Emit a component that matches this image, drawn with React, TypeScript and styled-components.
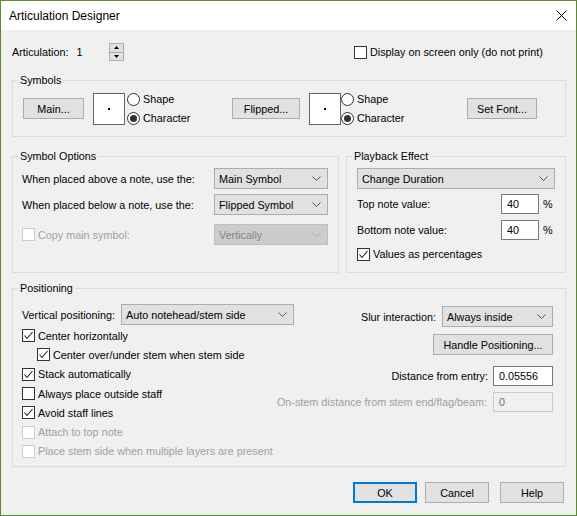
import React from "react";
import styled, { createGlobalStyle } from "styled-components";

const GlobalStyle = createGlobalStyle`
  * { box-sizing: border-box; }
  html, body { margin: 0; padding: 0; }
  body {
    background: #f0f0f0;
    font-family: "Liberation Sans", Arial, sans-serif;
    font-size: 10.8px;
    color: #000;
  }
`;

const Window = styled.div`
  width: 577px;
  height: 516px;
  border: 1px solid #5d8b2c;
  background: #f0f0f0;
  display: flex;
  flex-direction: column;
`;

const TitleBar = styled.div`
  height: 29px;
  flex: none;
  background: #fff;
  display: flex;
  align-items: center;
  justify-content: space-between;
  padding: 0 9px 0 8px;
  font-size: 12px;
`;

const Body = styled.div`
  flex: 1;
  display: flex;
  flex-direction: column;
  padding: 13px 10px 0 11px;
`;

const TopRow = styled.div`
  height: 18px;
  display: flex;
  align-items: center;
`;

const Value = styled.span`
  width: 33px;
  margin-left: 8px;
`;

const Spinner = styled.div`
  width: 15px;
  height: 18px;
  display: flex;
  flex-direction: column;
`;

const SpinHalf = styled.div`
  flex: 1;
  background: #e1e1e1;
  border: 1px solid #adadad;
  display: flex;
  align-items: center;
  justify-content: center;
  & + & {
    border-top: none;
  }
`;

const TopRight = styled.div`
  margin-left: auto;
  width: 212px;
`;

const Group = styled.div<{ $h: number; $w?: number; $mt?: number }>`
  position: relative;
  border: 1px solid #dcdcdc;
  height: ${(p) => p.$h}px;
  margin-top: ${(p) => p.$mt ?? 0}px;
  ${(p) => (p.$w ? `width: ${p.$w}px; flex: none;` : "")}
`;

const Legend = styled.span`
  position: absolute;
  top: -8px;
  left: 5px;
  padding: 0 2px;
  line-height: 14px;
  background: #f0f0f0;
`;

const SymbolsRow = styled.div`
  height: 100%;
  display: flex;
  align-items: center;
  padding-left: 10px;
`;

const Button = styled.button<{ $w: number; $ml?: number; $mt?: number; $default?: boolean }>`
  width: ${(p) => p.$w}px;
  height: 21px;
  flex: none;
  margin: ${(p) => p.$mt ?? 0}px 0 0 ${(p) => p.$ml ?? 0}px;
  padding: 0;
  background: #e1e1e1;
  border: ${(p) => (p.$default ? "2px solid #0078d7" : "1px solid #adadad")};
  font: inherit;
  color: #000;
`;

const Preview = styled.div<{ $ml: number }>`
  width: 32px;
  height: 32px;
  flex: none;
  margin-left: ${(p) => p.$ml}px;
  background: #fff;
  border: 1px solid #646464;
  display: flex;
  align-items: center;
  justify-content: center;
`;

const Dot = styled.span`
  width: 2px;
  height: 2px;
  background: #000;
`;

const RadioGroup = styled.div<{ $w: number; $ml: number }>`
  width: ${(p) => p.$w}px;
  margin-left: ${(p) => p.$ml}px;
  flex: none;
  display: flex;
  flex-direction: column;
`;

const OptionRow = styled.div<{ $h?: number; $indent?: number; $disabled?: boolean }>`
  height: ${(p) => p.$h ?? 19}px;
  display: flex;
  align-items: center;
  gap: 3px;
  padding-left: ${(p) => p.$indent ?? 0}px;
  white-space: nowrap;
  color: ${(p) => (p.$disabled ? "#a0a0a0" : "#000")};
`;

const RadioCircle = styled.span`
  width: 13px;
  height: 13px;
  flex: none;
  border: 1px solid #333;
  border-radius: 50%;
  background: #fff;
  display: flex;
  align-items: center;
  justify-content: center;
`;

const RadioDot = styled.span`
  width: 7px;
  height: 7px;
  border-radius: 50%;
  background: #333;
`;

const CheckBox = styled.span<{ $disabled?: boolean }>`
  width: 13px;
  height: 13px;
  flex: none;
  border: 1px solid ${(p) => (p.$disabled ? "#cccccc" : "#333")};
  background: #fff;
  display: flex;
  align-items: center;
  justify-content: center;
`;

const MiddleRow = styled.div`
  display: flex;
  gap: 7px;
  margin-top: 19px;
`;

const GroupBody = styled.div<{ $pad: string }>`
  padding: ${(p) => p.$pad};
  display: flex;
  flex-direction: column;
`;

const FormRow = styled.div<{ $h?: number; $mt?: number; $disabled?: boolean }>`
  height: ${(p) => p.$h ?? 21}px;
  margin-top: ${(p) => p.$mt ?? 0}px;
  display: flex;
  align-items: center;
  color: ${(p) => (p.$disabled ? "#a0a0a0" : "#000")};
`;

const Label = styled.span`
  flex: 1;
  white-space: nowrap;
`;

const Combo = styled.div<{ $w: number; $disabled?: boolean }>`
  width: ${(p) => p.$w}px;
  height: 21px;
  flex: none;
  display: flex;
  align-items: center;
  justify-content: space-between;
  padding: 0 6px 0 4px;
  background: ${(p) => (p.$disabled ? "#cccccc" : "#e1e1e1")};
  border: 1px solid ${(p) => (p.$disabled ? "#bfbfbf" : "#adadad")};
  color: ${(p) => (p.$disabled ? "#838383" : "#000")};
  white-space: nowrap;
`;

const TextBox = styled.div<{ $w: number; $disabled?: boolean }>`
  width: ${(p) => p.$w}px;
  height: 20px;
  flex: none;
  display: flex;
  align-items: center;
  padding-left: 5px;
  background: ${(p) => (p.$disabled ? "#f0f0f0" : "#fff")};
  border: 1px solid ${(p) => (p.$disabled ? "#cccccc" : "#7a7a7a")};
  color: ${(p) => (p.$disabled ? "#6d6d6d" : "#000")};
`;

const Percent = styled.span`
  width: 12px;
  margin-left: 4px;
`;

const PositionBody = styled.div`
  display: flex;
  justify-content: space-between;
  padding: 15px 12px 0 9px;
`;

const LeftColumn = styled.div`
  display: flex;
  flex-direction: column;
  min-width: 0;
  flex: 0 1 auto;
`;

const FixedLabel = styled.span<{ $w: number }>`
  width: ${(p) => p.$w}px;
  flex: none;
`;

const CheckList = styled.div`
  margin-top: 1px;
  display: flex;
  flex-direction: column;
`;

const RightColumn = styled.div`
  flex: none;
  display: flex;
  flex-direction: column;
  align-items: flex-end;
  padding-top: 2px;
`;

const RightRow = styled.div<{ $h: number; $mt?: number; $gap: number; $disabled?: boolean }>`
  height: ${(p) => p.$h}px;
  margin-top: ${(p) => p.$mt ?? 0}px;
  display: flex;
  align-items: center;
  gap: ${(p) => p.$gap}px;
  white-space: nowrap;
  color: ${(p) => (p.$disabled ? "#a0a0a0" : "#000")};
`;

const Footer = styled.div`
  display: flex;
  justify-content: flex-end;
  margin-top: 15px;
  padding-right: 2px;
`;

const Chevron = ({ color = "#555" }: { color?: string }) => (
  <svg width="9" height="5" viewBox="0 0 9 5">
    <polyline points="0.5,0.5 4.5,4.5 8.5,0.5" fill="none" stroke={color} strokeWidth="1" />
  </svg>
);

const Check = ({ checked, disabled }: { checked?: boolean; disabled?: boolean }) => (
  <CheckBox $disabled={disabled}>
    {checked && (
      <svg width="11" height="11" viewBox="0 0 11 11">
        <polyline points="1.5,5.5 4,8.5 9.5,2" fill="none" stroke="#222" strokeWidth="1.1" />
      </svg>
    )}
  </CheckBox>
);

const CheckOption = ({
  label,
  checked,
  disabled,
  indent,
  h,
}: {
  label: string;
  checked?: boolean;
  disabled?: boolean;
  indent?: number;
  h?: number;
}) => (
  <OptionRow $h={h} $indent={indent} $disabled={disabled}>
    <Check checked={checked} disabled={disabled} />
    <span>{label}</span>
  </OptionRow>
);

const Radio = ({ label, selected }: { label: string; selected?: boolean }) => (
  <OptionRow $h={19}>
    <RadioCircle>{selected && <RadioDot />}</RadioCircle>
    <span>{label}</span>
  </OptionRow>
);

const Select = ({ value, w, disabled }: { value: string; w: number; disabled?: boolean }) => (
  <Combo $w={w} $disabled={disabled}>
    <span>{value}</span>
    <Chevron color={disabled ? "#a8a8a8" : "#555"} />
  </Combo>
);

const Triangle = ({ up }: { up?: boolean }) => (
  <svg width="5" height="3" viewBox="0 0 5 3">
    <polygon points={up ? "0,3 5,3 2.5,0" : "0,0 5,0 2.5,3"} fill="#000" />
  </svg>
);

const SymbolSet = ({ button, bw, pml, rml, rw }: { button: string; bw: number; pml: number; rml: number; rw: number }) => (
  <>
    <Button $w={bw}>{button}</Button>
    <Preview $ml={pml}>
      <Dot />
    </Preview>
    <RadioGroup $w={rw} $ml={rml}>
      <Radio label="Shape" />
      <Radio label="Character" selected />
    </RadioGroup>
  </>
);

const positionChecks = [
  { label: "Center horizontally", checked: true },
  { label: "Center over/under stem when stem side", checked: true, indent: 15 },
  { label: "Stack automatically", checked: true },
  { label: "Always place outside staff" },
  { label: "Avoid staff lines", checked: true },
  { label: "Attach to top note", disabled: true },
  { label: "Place stem side when multiple layers are present", disabled: true },
];

export default function App() {
  return (
    <>
      <GlobalStyle />
      <Window>
        <TitleBar>
          <span>Articulation Designer</span>
          <svg width="11" height="11" viewBox="0 0 11 11">
            <path d="M0.5 0.5 L10.5 10.5 M10.5 0.5 L0.5 10.5" stroke="#000" strokeWidth="1" />
          </svg>
        </TitleBar>
        <Body>
          <TopRow>
            <span>Articulation:</span>
            <Value>1</Value>
            <Spinner>
              <SpinHalf>
                <Triangle up />
              </SpinHalf>
              <SpinHalf>
                <Triangle />
              </SpinHalf>
            </Spinner>
            <TopRight>
              <CheckOption label="Display on screen only (do not print)" h={18} />
            </TopRight>
          </TopRow>

          <Group $h={57} $mt={19}>
            <Legend>Symbols</Legend>
            <SymbolsRow>
              <SymbolSet button="Main..." bw={61} pml={9} rml={2} rw={105} />
              <SymbolSet button="Flipped..." bw={68} pml={9} rml={0} rw={126} />
              <Button $w={70}>Set Font...</Button>
            </SymbolsRow>
          </Group>

          <MiddleRow>
            <Group $h={117} $w={327}>
              <Legend>Symbol Options</Legend>
              <GroupBody $pad="11px 10px 0 9px">
                <FormRow>
                  <Label>When placed above a note, use the:</Label>
                  <Select value="Main Symbol" w={114} />
                </FormRow>
                <FormRow $mt={5}>
                  <Label>When placed below a note, use the:</Label>
                  <Select value="Flipped Symbol" w={114} />
                </FormRow>
                <FormRow $mt={9} $disabled>
                  <Label>
                    <OptionRow $h={21} $disabled>
                      <Check disabled />
                      <span>Copy main symbol:</span>
                    </OptionRow>
                  </Label>
                  <Select value="Vertically" w={114} disabled />
                </FormRow>
              </GroupBody>
            </Group>

            <Group $h={117} $w={220}>
              <Legend>Playback Effect</Legend>
              <GroupBody $pad="11px 10px 0 10px">
                <FormRow>
                  <Select value="Change Duration" w={198} />
                </FormRow>
                <FormRow $h={20} $mt={5}>
                  <Label>Top note value:</Label>
                  <TextBox $w={38}>40</TextBox>
                  <Percent>%</Percent>
                </FormRow>
                <FormRow $h={20} $mt={6}>
                  <Label>Bottom note value:</Label>
                  <TextBox $w={38}>40</TextBox>
                  <Percent>%</Percent>
                </FormRow>
                <FormRow $h={14} $mt={7}>
                  <CheckOption label="Values as percentages" checked h={14} />
                </FormRow>
              </GroupBody>
            </Group>
          </MiddleRow>

          <Group $h={179} $mt={15}>
            <Legend>Positioning</Legend>
            <PositionBody>
              <LeftColumn>
                <FormRow>
                  <FixedLabel $w={99}>Vertical positioning:</FixedLabel>
                  <Select value="Auto notehead/stem side" w={173} />
                </FormRow>
                <CheckList>
                  {positionChecks.map((c) => (
                    <CheckOption
                      key={c.label}
                      label={c.label}
                      checked={c.checked}
                      disabled={c.disabled}
                      indent={c.indent}
                      h={19.3}
                    />
                  ))}
                </CheckList>
              </LeftColumn>
              <RightColumn>
                <RightRow $h={21} $gap={6}>
                  <span>Slur interaction:</span>
                  <Select value="Always inside" w={111} />
                </RightRow>
                <Button $w={120} $mt={7}>
                  Handle Positioning...
                </Button>
                <RightRow $h={20} $mt={11} $gap={5}>
                  <span>Distance from entry:</span>
                  <TextBox $w={60}>0.05556</TextBox>
                </RightRow>
                <RightRow $h={20} $mt={6} $gap={6} $disabled>
                  <span>On-stem distance from stem end/flag/beam:</span>
                  <TextBox $w={60} $disabled>
                    0
                  </TextBox>
                </RightRow>
              </RightColumn>
            </PositionBody>
          </Group>

          <Footer>
            <Button $w={64} $default>
              OK
            </Button>
            <Button $w={64} $ml={8}>
              Cancel
            </Button>
            <Button $w={64} $ml={11}>
              Help
            </Button>
          </Footer>
        </Body>
      </Window>
    </>
  );
}
